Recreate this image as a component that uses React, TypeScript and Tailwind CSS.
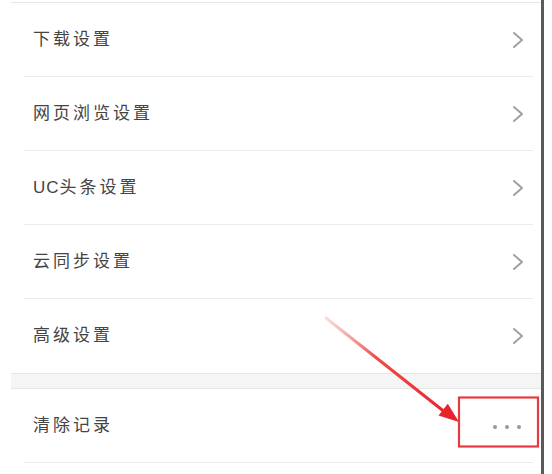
import React from 'react';

const items = ['下载设置', '网页浏览设置', 'UC头条设置', '云同步设置', '高级设置'];

const Chevron = () => (
  <svg width="12" height="18" viewBox="0 0 12 18" fill="none">
    <polyline points="2,2 10,9 2,16" stroke="#a0a0a0" strokeWidth="2" strokeLinecap="round" strokeLinejoin="round" />
  </svg>
);

const Label = ({ text }: { text: string }) => {
  if (text.startsWith('UC')) {
    return (
      <span className="text-[17px] text-[#444]">
        <span className="tracking-[1px]">UC</span>
        <span className="tracking-[3px]">{text.slice(2)}</span>
      </span>
    );
  }
  return <span className="text-[17px] tracking-[3px] text-[#444]">{text}</span>;
};

const App = () => {
  return (
    <div
      className="relative flex w-[552px] h-[474px] bg-white overflow-hidden"
      style={{ fontFamily: '"Liberation Sans", "Noto Sans CJK SC", sans-serif' }}
    >
      <div className="w-[541px] pt-[2px] pl-[11px]">
        <div className="border-t border-[#e6e6e6]">
          {items.map((label, i) => (
            <div key={label} className="pl-[13px] pr-[8px]">
              <div
                className={
                  'h-[74px] flex items-center justify-between pl-[9px] pr-[9px] ' +
                  (i < items.length - 1 ? 'border-b border-[#ebebeb]' : '')
                }
              >
                <Label text={label} />
                <Chevron />
              </div>
            </div>
          ))}
          <div className="h-[16px] bg-[#f5f5f5] border-y border-[#e6e6e6]" />
          <div className="pl-[13px] pr-[8px]">
            <div className="h-[74px] flex items-center justify-between pl-[9px] pr-[12px] border-b border-[#ebebeb]">
              <Label text="清除记录" />
              <div className="flex gap-[8px] mt-[2px]">
                <span className="w-[4px] h-[4px] rounded-full bg-[#999]" />
                <span className="w-[4px] h-[4px] rounded-full bg-[#999]" />
                <span className="w-[4px] h-[4px] rounded-full bg-[#999]" />
              </div>
            </div>
          </div>
        </div>
      </div>
      <div className="w-[3px] bg-[#5a5a5a]" />
      <div className="flex-1 bg-white" />

      {/* annotation overlay */}
      <svg className="absolute left-0 top-0 pointer-events-none" width="552" height="474">
        <defs>
          <linearGradient id="arr" x1="326" y1="318" x2="450" y2="417" gradientUnits="userSpaceOnUse">
            <stop offset="0" stopColor="#f4a5a5" stopOpacity="0.4" />
            <stop offset="0.4" stopColor="#ee4b4b" />
            <stop offset="1" stopColor="#e8232a" />
          </linearGradient>
        </defs>
        <line x1="326" y1="318" x2="446" y2="413" stroke="url(#arr)" strokeWidth="3" strokeLinecap="round" />
        <polygon points="459,422 438.5,415.5 447.8,403.8" fill="#e8232a" />
        <rect x="459" y="397.5" width="79" height="49" fill="none" stroke="#e53a3f" strokeWidth="2.2" />
      </svg>
    </div>
  );
};

export default App;
